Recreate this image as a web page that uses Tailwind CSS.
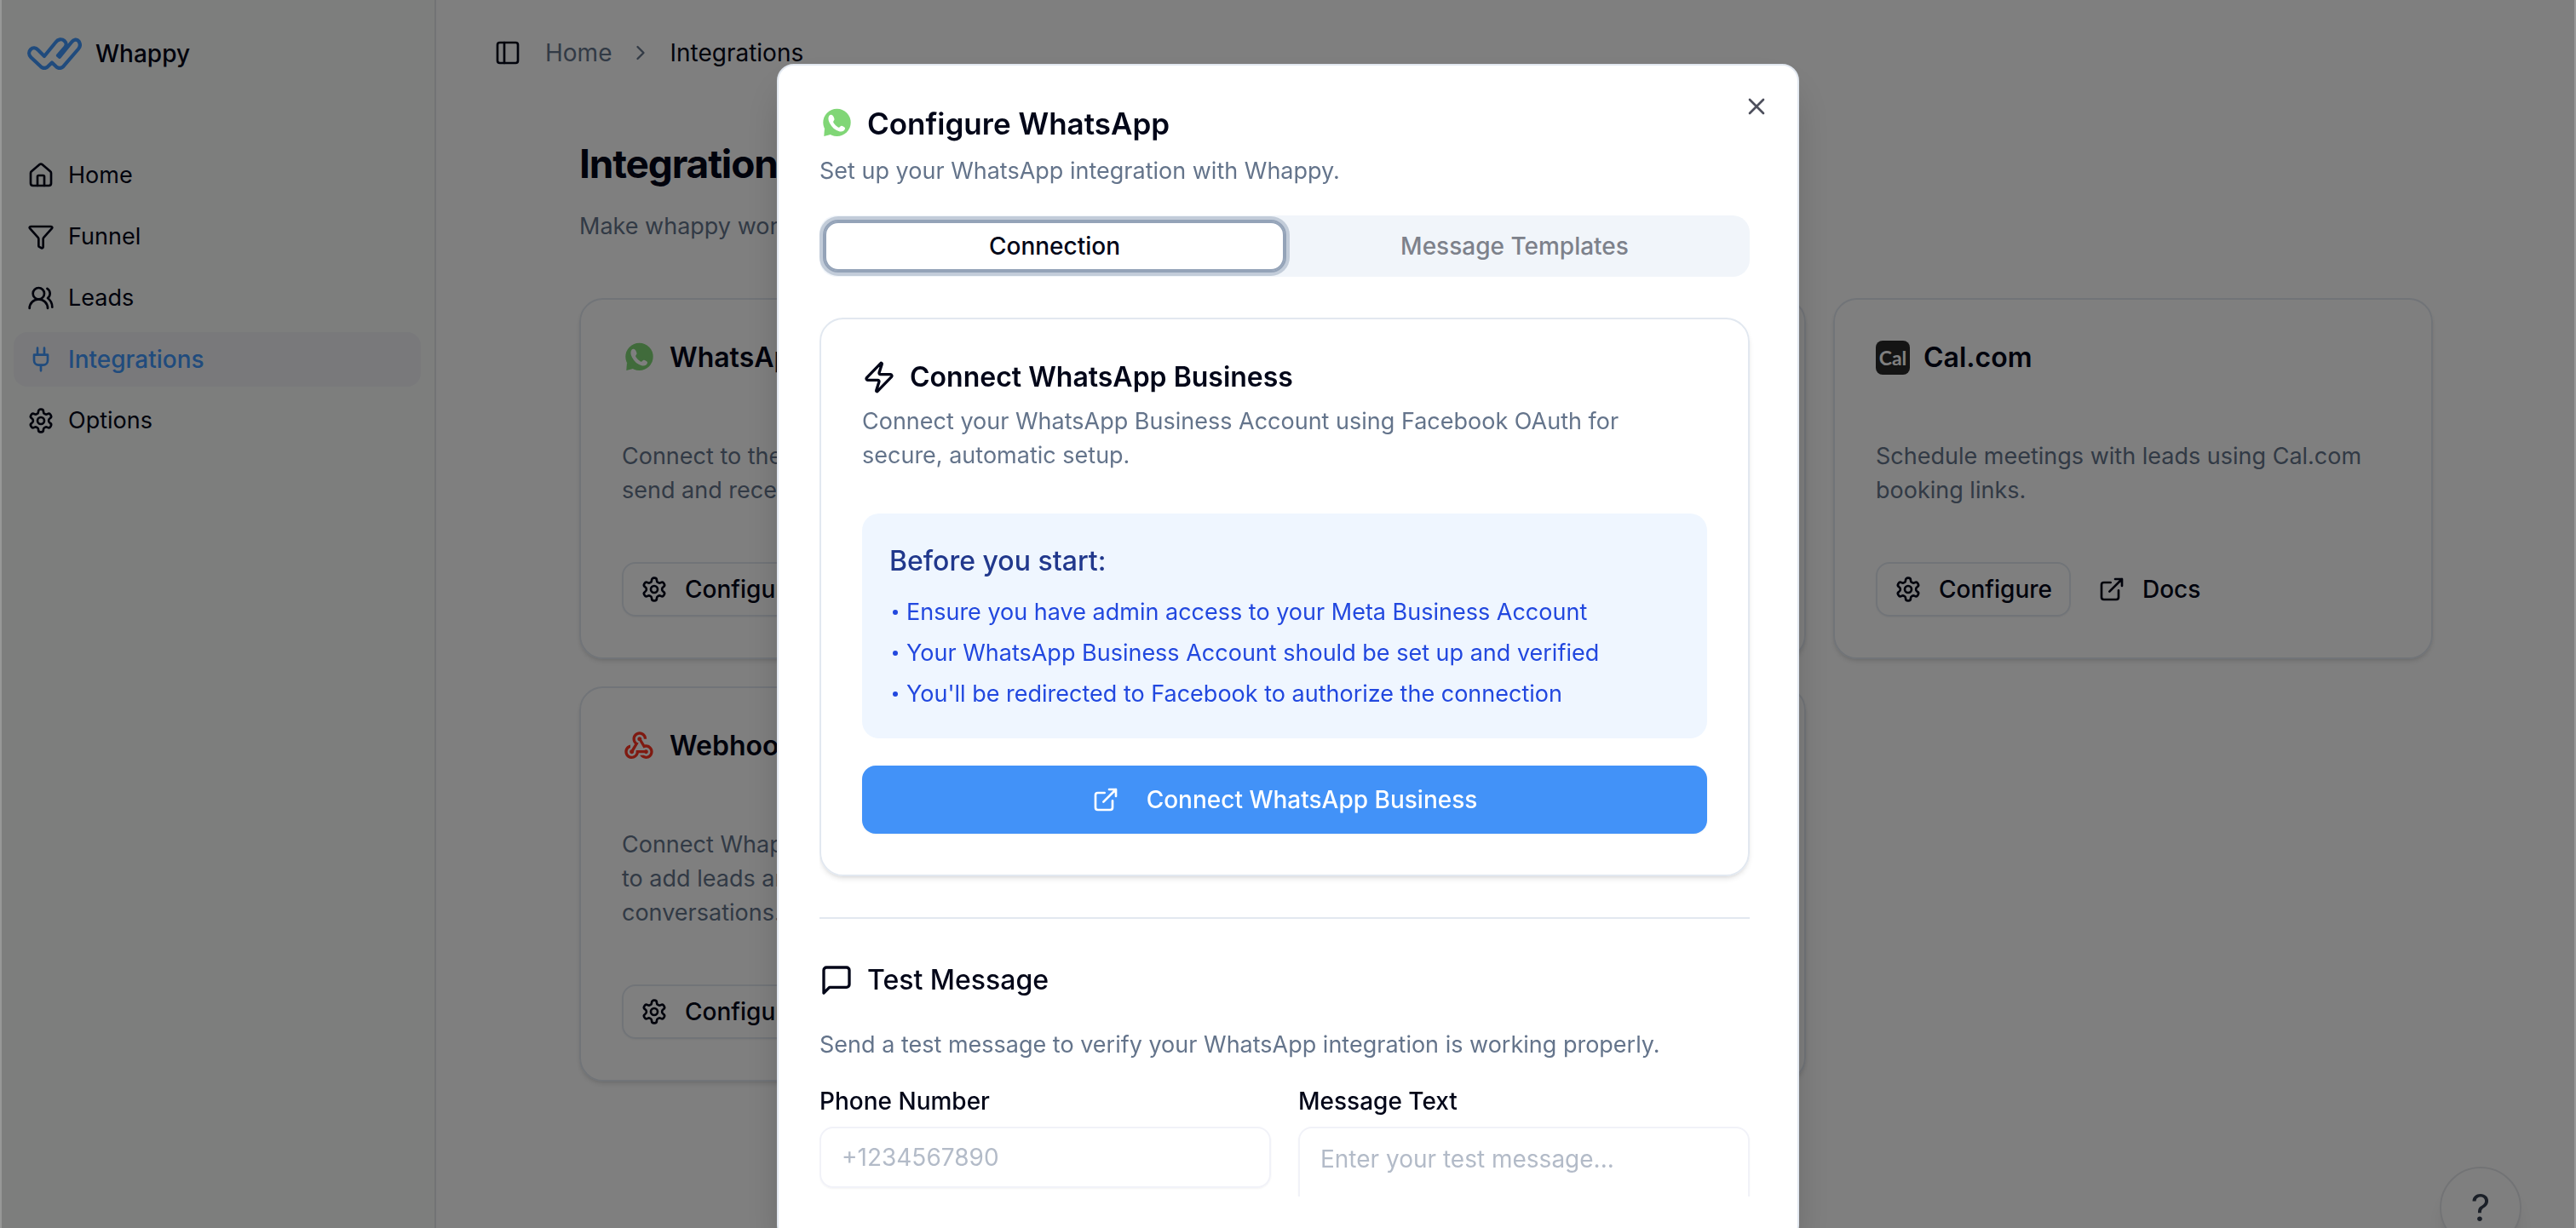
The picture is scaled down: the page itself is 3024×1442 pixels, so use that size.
<!DOCTYPE html>
<html lang="en">
<head>
<meta charset="utf-8">
<title>Whappy – Integrations</title>
<script src="https://cdn.jsdelivr.net/npm/@tailwindcss/browser@4"></script>
</head>
<body class="h-screen overflow-hidden bg-white font-['Inter',sans-serif] text-[27px] leading-[40px] text-[#020618]">

<!-- Shared icons -->
<svg class="hidden" aria-hidden="true">
  <symbol id="gear" viewBox="0 0 24 24" fill="none" stroke="currentColor" stroke-width="2" stroke-linecap="round" stroke-linejoin="round"><path d="M12.22 2h-.44a2 2 0 0 0-2 2v.18a2 2 0 0 1-1 1.73l-.43.25a2 2 0 0 1-2 0l-.15-.08a2 2 0 0 0-2.73.73l-.22.38a2 2 0 0 0 .73 2.73l.15.1a2 2 0 0 1 1 1.72v.51a2 2 0 0 1-1 1.74l-.15.09a2 2 0 0 0-.73 2.73l.22.38a2 2 0 0 0 2.73.73l.15-.08a2 2 0 0 1 2 0l.43.25a2 2 0 0 1 1 1.73V20a2 2 0 0 0 2 2h.44a2 2 0 0 0 2-2v-.18a2 2 0 0 1 1-1.73l.43-.25a2 2 0 0 1 2 0l.15.08a2 2 0 0 0 2.73-.73l.22-.39a2 2 0 0 0-.73-2.73l-.15-.08a2 2 0 0 1-1-1.74v-.5a2 2 0 0 1 1-1.74l.15-.09a2 2 0 0 0 .73-2.73l-.22-.38a2 2 0 0 0-2.73-.73l-.15.08a2 2 0 0 1-2 0l-.43-.25a2 2 0 0 1-1-1.73V4a2 2 0 0 0-2-2z"/><circle cx="12" cy="12" r="3"/></symbol>
  <symbol id="external" viewBox="0 0 24 24" fill="none" stroke="currentColor" stroke-width="2" stroke-linecap="round" stroke-linejoin="round"><path d="M15 3h6v6M10 14 21 3M18 13v6a2 2 0 0 1-2 2H5a2 2 0 0 1-2-2V8a2 2 0 0 1 2-2h6"/></symbol>
  <symbol id="whatsapp" viewBox="-12 -9 121 121"><circle cx="50" cy="48" r="49" fill="#80d676"/><path d="M6 70 4 97l26-7z" fill="#80d676"/><path d="M24 22C18 28 18 38 24 50c8 16 20 26 36 30 10 2 18-4 19-11 0-4-7-7-12-9-4-1-7 6-10 6-7-2-17-12-20-19-1-4 4-7 4-11 0-4-5-14-9-15-3-1-6-1-8 1z" fill="#fff"/></symbol>
</svg>

<div class="flex h-full">
  <!-- Sidebar -->
  <aside class="flex w-[512px] shrink-0 flex-col border-r-2 border-[#e5e7eb] bg-[#fafcfa] px-4">
    <div class="flex h-[126px] items-center gap-4 px-4">
      <svg class="h-[38px] w-16" viewBox="0 0 64 38" fill="none" stroke="#4096fa" stroke-width="4.2" stroke-linejoin="round"><path d="M20 22 33.5 5.5C36 2 40.500 1.200 43.500 3.800 46.300 6.300 46.200 9.500 44 12L36 21.200 38 22.800 52 5.500C54.500 2 58.500 1.500 60.500 4.500 62.500 7.500 62 11 60 13.500L42 34.300Q38 37.700 34 34.300L29 29.500 24 34.300Q20 37.700 16 34.300L4.500 23.500C1.500 20.500 1.500 16.500 4 14 6.500 11.500 10 12 12.500 14.500Z"/></svg>
      <span class="text-[28px] font-medium">Whappy</span>
    </div>
    <nav class="mt-12 flex flex-col gap-2">
      <a href="#" class="flex h-16 items-center gap-4 rounded-2xl px-4"><svg class="size-8" viewBox="0 0 24 24" fill="none" stroke="currentColor" stroke-width="2" stroke-linecap="round" stroke-linejoin="round"><path d="M15 21v-8a1 1 0 0 0-1-1h-4a1 1 0 0 0-1 1v8"/><path d="M3 10a2 2 0 0 1 .709-1.528l7-5.999a2 2 0 0 1 2.582 0l7 5.999A2 2 0 0 1 21 10v9a2 2 0 0 1-2 2H5a2 2 0 0 1-2-2z"/></svg>Home</a>
      <a href="#" class="flex h-16 items-center gap-4 rounded-2xl px-4"><svg class="size-8" viewBox="0 0 24 24" fill="none" stroke="currentColor" stroke-width="2" stroke-linecap="round" stroke-linejoin="round"><path d="M10 20a1 1 0 0 0 .553.895l2 1A1 1 0 0 0 14 21v-7a2 2 0 0 1 .517-1.341L21.740 4.670A1 1 0 0 0 21 3H3a1 1 0 0 0-.742 1.670l7.225 7.989A2 2 0 0 1 10 14z"/></svg>Funnel</a>
      <a href="#" class="flex h-16 items-center gap-4 rounded-2xl px-4"><svg class="size-8" viewBox="0 0 24 24" fill="none" stroke="currentColor" stroke-width="2" stroke-linecap="round" stroke-linejoin="round"><path d="M18 21a8 8 0 0 0-16 0"/><circle cx="10" cy="8" r="5"/><path d="M22 20c0-3.370-2-6.500-4-8a5 5 0 0 0-.450-8.300"/></svg>Leads</a>
      <a href="#" class="flex h-16 items-center gap-4 rounded-2xl bg-[#f2f3f7] px-4 text-[28px] font-medium text-[#4096fa]"><svg class="size-8" viewBox="0 0 24 24" fill="none" stroke="currentColor" stroke-width="2" stroke-linecap="round" stroke-linejoin="round"><path d="M12 22v-5M9 8V2M15 8V2M18 8v5a4 4 0 0 1-4 4h-4a4 4 0 0 1-4-4V8Z"/></svg>Integrations</a>
      <a href="#" class="flex h-16 items-center gap-4 rounded-2xl px-4"><svg class="size-8"><use href="#gear"/></svg>Options</a>
    </nav>
  </aside>

  <!-- Main column -->
  <div class="flex min-w-0 grow flex-col">
    <header class="flex h-[124px] items-center gap-4 px-14">
      <button class="flex size-14 items-center justify-center" aria-label="Toggle sidebar"><svg class="size-8" viewBox="0 0 24 24" fill="none" stroke="currentColor" stroke-width="2" stroke-linecap="round" stroke-linejoin="round"><rect width="18" height="18" x="3" y="3" rx="2"/><path d="M9 3v18"/></svg></button>
      <nav class="flex items-center gap-5 text-[28px]" aria-label="Breadcrumb">
        <a href="#" class="text-[#64748b]">Home</a>
        <svg class="size-7 text-[#64748b]" viewBox="0 0 24 24" fill="none" stroke="currentColor" stroke-width="2" stroke-linecap="round" stroke-linejoin="round"><path d="m9 18 6-6-6-6"/></svg>
        <span>Integrations</span>
      </nav>
    </header>
    <main class="mx-auto w-full max-w-[2240px] px-8 pt-9">
      <h1 class="text-[46px] leading-[64px] font-bold tracking-tight">Integrations</h1>
      <p class="mt-[22px] text-[#64748b]">Make whappy work for you.</p>

      <div class="mt-16 grid grid-cols-3 gap-8">
        <section class="rounded-[28px] border-2 border-[#e2e8f0] p-12 shadow-md">
          <h2 class="flex h-10 items-center gap-4 text-[32px] font-semibold"><svg class="size-10"><use href="#whatsapp"/></svg>WhatsApp</h2>
          <p class="mt-[76px] text-[#64748b]">Connect to the API to<br>send and receive texts.</p>
          <div class="mt-16 flex gap-4">
            <button class="flex h-16 items-center gap-5 rounded-2xl border-2 border-[#e2e8f0] px-5 text-[28px] font-medium shadow-xs"><svg class="size-8"><use href="#gear"/></svg>Configure</button>
          </div>
        </section>
        <section class="rounded-[28px] border-2 border-[#e2e8f0] shadow-md"></section>
        <section class="rounded-[28px] border-2 border-[#e2e8f0] p-12 shadow-md">
          <h2 class="flex h-10 items-center gap-4 text-[32px] font-semibold"><span class="flex size-10 items-center justify-center rounded-lg bg-[#292929] font-['Lato',sans-serif] text-[23px] font-bold text-white">Cal</span>Cal.com</h2>
          <p class="mt-[76px] text-[#64748b]">Schedule meetings with leads using Cal.com<br>booking links.</p>
          <div class="mt-16 flex gap-4">
            <button class="flex h-16 items-center gap-5 rounded-2xl border-2 border-[#e2e8f0] px-5 text-[28px] font-medium shadow-xs"><svg class="size-8"><use href="#gear"/></svg>Configure</button>
            <a href="#" class="flex h-16 items-center gap-5 rounded-2xl px-4 text-[28px] font-medium"><svg class="size-8"><use href="#external"/></svg>Docs</a>
          </div>
        </section>
        <section class="rounded-[28px] border-2 border-[#e2e8f0] p-12 shadow-md">
          <h2 class="flex h-10 items-center gap-4 text-[32px] font-semibold"><svg class="size-10" viewBox="0 0 24 24" fill="#ff3522"><path d="M10 15h5.880c.27-.31.67-.5 1.120-.5.830 0 1.500.67 1.500 1.500s-.67 1.500-1.500 1.500c-.44 0-.84-.19-1.120-.5h-3.980c-.46 2.280-2.480 4-4.900 4-2.760 0-5-2.240-5-5 0-2.420 1.720-4.440 4-4.900v2.070C4.840 13.580 4 14.700 4 16c0 1.650 1.350 3 3 3s3-1.350 3-3zM12.500 4c1.650 0 3 1.350 3 3h2c0-2.760-2.240-5-5-5s-5 2.240-5 5c0 1.430.6 2.710 1.550 3.620l-2.350 3.900C6.020 14.660 5.500 15.270 5.500 16c0 .83.67 1.500 1.500 1.500s1.500-.67 1.500-1.500c0-.16-.02-.31-.07-.45l3.380-5.630C10.490 9.610 9.500 8.420 9.500 7c0-1.650 1.350-3 3-3zM17 13c-.64 0-1.230.2-1.720.54l-3.050-5.070C11.530 8.350 11 7.740 11 7c0-.83.67-1.500 1.500-1.500S14 6.170 14 7c0 .15-.02.29-.06.43l2.190 3.650C16.410 11.030 16.700 11 17 11c2.760 0 5 2.240 5 5s-2.240 5-5 5c-1.850 0-3.470-1.010-4.330-2.500h2.670c.48.32 1.050.5 1.660.5 1.650 0 3-1.350 3-3s-1.350-3-3-3z"/></svg>Webhooks</h2>
          <p class="mt-[76px] text-[#64748b]">Connect Whappy apps<br>to add leads and<br>conversations.</p>
          <div class="mt-16 flex gap-4">
            <button class="flex h-16 items-center gap-5 rounded-2xl border-2 border-[#e2e8f0] px-5 text-[28px] font-medium shadow-xs"><svg class="size-8"><use href="#gear"/></svg>Configure</button>
          </div>
        </section>
        <section class="rounded-[28px] border-2 border-[#e2e8f0] shadow-md"></section>
      </div>
    </main>
  </div>
</div>

<!-- Floating help button -->
<button class="fixed right-16 -bottom-6 flex size-24 items-center justify-center rounded-full border-2 border-[#e5e7eb] bg-white text-[44px] text-[#374151] shadow-xl">?</button>

<!-- Backdrop -->
<div class="fixed inset-0 border-x-2 border-white/20 bg-black/50"></div>

<!-- Dialog -->
<div role="dialog" aria-labelledby="dialog-title" class="fixed top-[75px] left-1/2 flex h-[96vh] w-[1200px] -translate-x-1/2 flex-col rounded-[20px] border-2 border-[#e2e8f0] bg-white p-12 pb-[52px] shadow-2xl">
  <button class="absolute top-8 right-8 flex size-8 items-center justify-center opacity-70" aria-label="Close"><svg class="size-8" viewBox="0 0 24 24" fill="none" stroke="currentColor" stroke-width="2" stroke-linecap="round" stroke-linejoin="round"><path d="M18 6 6 18M6 6l12 12"/></svg></button>
  <h2 id="dialog-title" class="flex h-10 items-center gap-4 text-[35px] leading-10 font-semibold"><svg class="size-10"><use href="#whatsapp"/></svg>Configure WhatsApp</h2>
  <p class="mt-4 text-[#64748b]">Set up your WhatsApp integration with Whappy.</p>

  <div class="mt-8 flex min-h-0 grow flex-col overflow-hidden pr-2">
    <div role="tablist" class="grid h-[72px] shrink-0 grid-cols-2 items-center rounded-[20px] bg-[#f1f5fa] px-[6px] text-[28px]">
      <button role="tab" aria-selected="true" class="flex h-[58px] items-center justify-center rounded-2xl border-2 border-[#94a3b8] bg-white font-medium ring-[6px] ring-[#94a3b8]/50 outline-2 outline-[#94a3b8]">Connection</button>
      <button role="tab" aria-selected="false" class="flex h-[58px] items-center justify-center font-medium text-[#7d818b]">Message Templates</button>
    </div>

    <section class="mt-12 shrink-0 rounded-[28px] border-2 border-[#e2e8f0] p-12 shadow-md">
      <h3 class="flex h-10 items-center gap-4 text-[32px] font-semibold"><svg class="size-10" viewBox="0 0 24 24" fill="none" stroke="currentColor" stroke-width="2" stroke-linecap="round" stroke-linejoin="round"><path d="M4 14a1 1 0 0 1-.78-1.630l9.900-10.200a.5.5 0 0 1 .86.46l-1.920 6.020A1 1 0 0 0 13 10h7a1 1 0 0 1 .78 1.630l-9.900 10.200a.5.5 0 0 1-.86-.46l1.920-6.020A1 1 0 0 0 11 14z"/></svg>Connect WhatsApp Business</h3>
      <p class="mt-3 text-[#64748b]">Connect your WhatsApp Business Account using Facebook OAuth for<br>secure, automatic setup.</p>
      <div class="mt-12 rounded-[20px] bg-[#eff6ff] p-8">
        <h4 class="text-[32px] leading-[48px] font-medium text-[#21388c]">Before you start:</h4>
        <ul class="mt-4 flex flex-col gap-2 text-[#2248df]">
          <li class="flex items-center gap-[10px] pl-1"><span class="size-[6px] rounded-full bg-[#2248df]"></span>Ensure you have admin access to your Meta Business Account</li>
          <li class="flex items-center gap-[10px] pl-1"><span class="size-[6px] rounded-full bg-[#2248df]"></span>Your WhatsApp Business Account should be set up and verified</li>
          <li class="flex items-center gap-[10px] pl-1"><span class="size-[6px] rounded-full bg-[#2248df]"></span>You'll be redirected to Facebook to authorize the connection</li>
        </ul>
      </div>
      <button class="mt-8 flex h-20 w-full items-center justify-center gap-8 rounded-2xl bg-[#4292f8] text-[28px] font-medium text-white shadow-xs"><svg class="size-8"><use href="#external"/></svg>Connect WhatsApp Business</button>
    </section>

    <hr class="mt-12 shrink-0 border-t-2 border-[#e2e8f0]">

    <section class="mt-12 shrink-0">
      <h3 class="flex h-12 items-center gap-4 text-[32px] font-medium"><svg class="size-10" viewBox="0 0 24 24" fill="none" stroke="currentColor" stroke-width="2" stroke-linecap="round" stroke-linejoin="round"><path d="M21 15a2 2 0 0 1-2 2H7l-4 4V5a2 2 0 0 1 2-2h14a2 2 0 0 1 2 2z"/></svg>Test Message</h3>
      <p class="mt-8 text-[#64748b]">Send a test message to verify your WhatsApp integration is working properly.</p>
      <div class="mt-8 grid grid-cols-2 items-start gap-8 text-[28px]">
        <div class="flex flex-col gap-4">
          <label for="phone" class="leading-7 font-medium">Phone Number</label>
          <input id="phone" type="tel" placeholder="+1234567890" class="h-[72px] w-full rounded-2xl border-2 border-[#f1f2f8] px-6 shadow-xs outline-none placeholder:text-[#b3bbc8]">
        </div>
        <div class="flex flex-col gap-4">
          <label for="message" class="leading-7 font-medium">Message Text</label>
          <textarea id="message" placeholder="Enter your test message..." class="h-40 w-full resize-none rounded-2xl border-2 border-[#f1f2f8] px-6 py-4 leading-[40px] shadow-xs outline-none placeholder:text-[#b3bbc8]"></textarea>
        </div>
      </div>
    </section>
  </div>
</div>
</body>
</html>
